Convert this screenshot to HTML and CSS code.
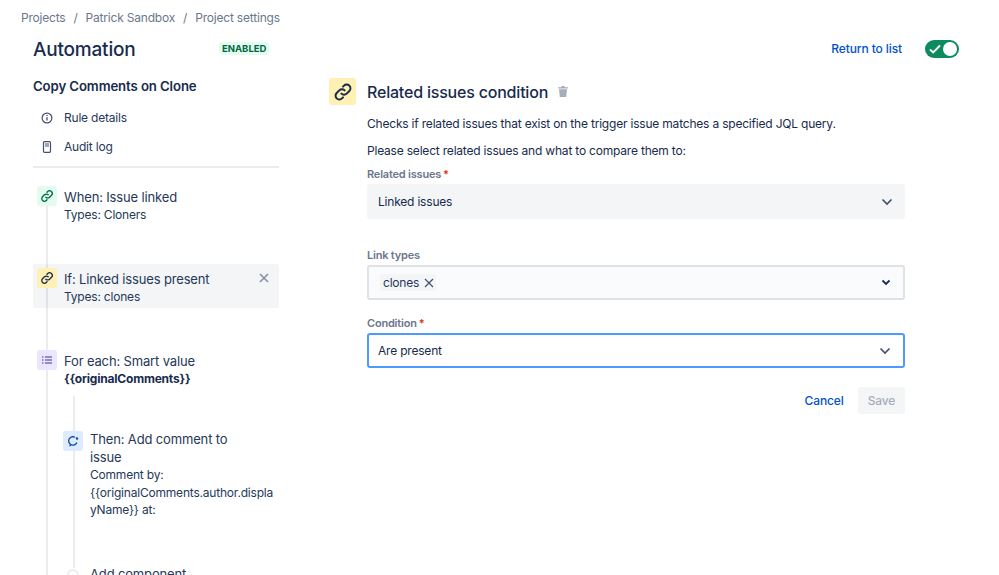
FILE: index.html
```html
<!DOCTYPE html>
<html>
<head>
    <title>Automation - Project settings</title>
    <link rel="stylesheet" href="styles.css">
</head>
<body>
    <nav class="breadcrumbs">
        <span>Projects</span><span class="sep">/</span><span>Patrick Sandbox</span><span class="sep">/</span><span>Project settings</span>
    </nav>
    <header class="page-head">
        <div class="head-left">
            <h1>Automation</h1>
            <span class="lozenge">ENABLED</span>
        </div>
        <div class="head-right">
            <a class="link">Return to list</a>
            <span class="toggle">
                <svg width="14" height="12" viewBox="0 0 14 12"><path d="M2 6.5l3.2 3L12 2.5" fill="none" stroke="#fff" stroke-width="1.8"/></svg>
                <span class="knob"></span>
            </span>
        </div>
    </header>
    <div class="content">
        <aside class="sidebar">
            <h2>Copy Comments on Clone</h2>
            <div class="side-link">
                <svg width="14" height="14" viewBox="0 0 14 14"><circle cx="7" cy="7" r="4.9" fill="none" stroke="#42526e" stroke-width="1.2"/><path d="M7 4v.9M7 6.3v3.2" stroke="#42526e" stroke-width="1.3"/></svg>
                <span>Rule details</span>
            </div>
            <div class="side-link">
                <svg width="14" height="14" viewBox="0 0 14 14"><rect x="3.5" y="1.7" width="7" height="10.6" rx="1" fill="none" stroke="#42526e" stroke-width="1.2"/><path d="M5 4h4M5 6h4" stroke="#42526e" stroke-width="1.2"/></svg>
                <span>Audit log</span>
            </div>
            <hr class="divider">
            <div class="tree">
                <div class="step step-when">
                    <span class="step-icon icon-green">
                        <svg width="14" height="14" viewBox="0 0 24 24"><path d="M10 14a4.500 4.500 0 0 0 6.400 0l3.200-3.200a4.500 4.500 0 0 0-6.400-6.400L12 5.600M14 10a4.500 4.500 0 0 0-6.400 0l-3.200 3.200a4.500 4.500 0 0 0 6.400 6.400L12 18.400" fill="none" stroke="#006644" stroke-width="2.300" stroke-linecap="round"/></svg>
                    </span>
                    <div class="step-text">
                        <div class="step-title">When: Issue linked</div>
                        <div class="step-sub">Types: Cloners</div>
                    </div>
                </div>
                <div class="step step-if">
                    <span class="step-icon icon-yellow">
                        <svg width="14" height="14" viewBox="0 0 24 24"><path d="M10 14a4.500 4.500 0 0 0 6.400 0l3.200-3.200a4.500 4.500 0 0 0-6.400-6.400L12 5.600M14 10a4.500 4.500 0 0 0-6.400 0l-3.200 3.200a4.500 4.500 0 0 0 6.400 6.400L12 18.400" fill="none" stroke="#172b4d" stroke-width="2.300" stroke-linecap="round"/></svg>
                    </span>
                    <div class="step-text">
                        <div class="step-title">If: Linked issues present</div>
                        <div class="step-sub">Types: clones</div>
                    </div>
                    <svg class="step-close" width="10" height="10" viewBox="0 0 10 10"><path d="M1 1l8 8M9 1L1 9" stroke="#8993a4" stroke-width="1.700"/></svg>
                </div>
                <div class="step step-each">
                    <span class="step-icon icon-purple">
                        <svg width="10" height="8" viewBox="0 0 10 8"><path d="M0 1h1.500M3 1h7M0 4h1.500M3 4h7M0 7h1.500M3 7h7" stroke="#403294" stroke-width="1.200"/></svg>
                    </span>
                    <div class="step-text">
                        <div class="step-title">For each: Smart value</div>
                        <div class="step-sub"><b>{{originalComments}}</b></div>
                    </div>
                </div>
                <div class="branch">
                    <div class="step step-then">
                        <span class="step-icon icon-blue">
                            <svg width="12" height="12" viewBox="0 0 12 12"><path d="M9.800 7.500A4.200 4.200 0 1 1 8 2.300M4 10l-1.500 1" fill="none" stroke="#0747a6" stroke-width="1.300"/><circle cx="10" cy="3.500" r="1.200" fill="#0747a6"/></svg>
                        </span>
                        <div class="then-text">
                            <div class="step-title">Then: Add comment to issue</div>
                            <div class="step-sub">Comment by: {{originalComments.author.displayName}} at:</div>
                        </div>
                    </div>
                    <div class="add-row">
                        <span class="add-dot"></span>
                        <span class="step-title">Add component</span>
                    </div>
                </div>
            </div>
        </aside>
        <main class="panel">
            <div class="panel-head">
                <span class="panel-icon">
                    <svg width="20" height="20" viewBox="0 0 24 24"><path d="M10 14a4.500 4.500 0 0 0 6.400 0l3.200-3.200a4.500 4.500 0 0 0-6.400-6.400L12 5.600M14 10a4.500 4.500 0 0 0-6.400 0l-3.200 3.200a4.500 4.500 0 0 0 6.400 6.400L12 18.400" fill="none" stroke="#172b4d" stroke-width="2.400" stroke-linecap="round"/></svg>
                </span>
                <h3>Related issues condition</h3>
                <svg class="trash" width="12" height="13" viewBox="0 0 12 13"><path d="M1 2.200h10v1.300H1zM4.300 1h3.400v1.200H4.300zM2 4.300h8L9.200 12H2.800z" fill="#a5adba"/></svg>
            </div>
            <div class="form">
                <p class="desc">Checks if related issues that exist on the trigger issue matches a specified JQL query.</p>
                <p class="desc desc-two">Please select related issues and what to compare them to:</p>
                <label class="field-label">Related issues<span class="req">*</span></label>
                <div class="select select-plain">
                    <span>Linked issues</span>
                    <svg width="12" height="8" viewBox="0 0 12 8"><path d="M1.500 1.500L6 6l4.500-4.500" fill="none" stroke="#42526e" stroke-width="1.700"/></svg>
                </div>
                <label class="field-label label-links">Link types</label>
                <div class="select select-multi">
                    <span class="tag">clones
                        <svg width="10" height="10" viewBox="0 0 10 10"><path d="M1 1l8 8M9 1L1 9" stroke="#42526e" stroke-width="1.200"/></svg>
                    </span>
                    <svg width="10" height="7" viewBox="0 0 10 7"><path d="M1.500 1.500L5 5l3.500-3.500" fill="none" stroke="#172b4d" stroke-width="1.800"/></svg>
                </div>
                <label class="field-label label-cond">Condition<span class="req">*</span></label>
                <div class="select select-focus">
                    <span>Are present</span>
                    <svg width="12" height="8" viewBox="0 0 12 8"><path d="M1.500 1.500L6 6l4.500-4.500" fill="none" stroke="#42526e" stroke-width="1.700"/></svg>
                </div>
                <div class="actions">
                    <a class="link">Cancel</a>
                    <span class="btn-disabled">Save</span>
                </div>
            </div>
        </main>
    </div>
</body>
</html>
```
FILE: styles.css
```css
html, body {
    height: 575px;
    overflow: hidden;
}
body {
    margin: 0;
    background: #fff;
    color: #172b4d;
    font-family: Inter, "Liberation Sans", sans-serif;
    font-size: 12px;
    letter-spacing: -0.2px;
}
.breadcrumbs {
    padding: 11px 0 0 21px;
    height: 14px;
    line-height: 14px;
    color: #6b778c;
}
.sep {
    margin: 0 8px;
}
.page-head {
    display: flex;
    justify-content: space-between;
    align-items: center;
    margin-top: 11px;
    padding: 0 40px 0 33px;
    height: 26px;
}
.head-left {
    display: flex;
    align-items: center;
}
h1 {
    margin: 0;
    width: 186px;
    font-size: 19px;
    font-weight: 500;
    letter-spacing: -0.2px;
}
.lozenge {
    margin-bottom: 2px;
    padding: 1px 3px;
    border-radius: 3px;
    background: #e3fcef;
    color: #006644;
    font-size: 9.500px;
    font-weight: 700;
    line-height: 11px;
    letter-spacing: 0;
}
.head-right {
    display: flex;
    align-items: center;
    gap: 23px;
}
.head-right .link {
    margin-bottom: 2px;
}
.link {
    color: #0052cc;
    font-weight: 500;
    letter-spacing: -0.1px;
}
.toggle {
    display: flex;
    align-items: center;
    justify-content: space-between;
    box-sizing: border-box;
    width: 34px;
    height: 18px;
    padding: 0 2px 0 3px;
    border-radius: 9px;
    background: #0e8a5f;
}
.knob {
    width: 14px;
    height: 14px;
    border-radius: 50%;
    background: #fff;
}
.content {
    display: flex;
    margin-top: 16px;
    padding-left: 33px;
}
.sidebar {
    width: 246px;
    flex: none;
}
h2 {
    margin: 0 0 8px;
    font-size: 13.200px;
    font-weight: 600;
    line-height: 17px;
    letter-spacing: -0.1px;
}
.side-link {
    display: flex;
    align-items: center;
    gap: 10px;
    height: 29px;
    padding-left: 7px;
    color: #253858;
}
.divider {
    margin: 5px 0 0;
    border: 0;
    border-top: 2px solid #ebecf0;
}
.tree {
    position: relative;
    padding-top: 18px;
}
.tree::before {
    content: "";
    position: absolute;
    left: 13px;
    top: 30px;
    bottom: -200px;
    width: 2px;
    background: #ebecf0;
}
.step {
    position: relative;
    display: flex;
    gap: 7px;
    padding-left: 4px;
}
.step-icon {
    flex: none;
    display: flex;
    align-items: center;
    justify-content: center;
    width: 20px;
    height: 20px;
    border-radius: 3px;
}
.icon-green {
    background: #e3fcef;
}
.icon-yellow {
    background: #fff0b3;
}
.icon-purple {
    background: #eae6ff;
}
.icon-blue {
    background: #deebff;
}
.step-text {
    padding-top: 2px;
}
.step-title {
    font-size: 13px;
    line-height: 18px;
    color: #253858;
    letter-spacing: -0.15px;
}
.step-sub {
    line-height: 17.500px;
    color: #253858;
}
.step-sub b {
    color: #172b4d;
}
.step-if {
    margin: 40px 0 0;
    padding-top: 4px;
    height: 40px;
    border-radius: 3px;
    background: rgba(9, 30, 66, 0.045);
}
.step-close {
    position: absolute;
    right: 10px;
    top: 9px;
}
.step-each {
    margin-top: 42px;
}
.branch {
    position: relative;
    margin: 0 0 0 40px;
    padding-top: 44px;
}
.branch::before {
    content: "";
    position: absolute;
    left: 0;
    top: 9px;
    height: 172px;
    width: 2px;
    background: #ebecf0;
}
.step-then {
    margin-left: -14px;
}
.then-text {
    width: 185px;
    overflow-wrap: anywhere;
}
.then-text .step-title {
    max-width: 170px;
    line-height: 17.500px;
}
.add-row {
    display: flex;
    gap: 11px;
    margin: 46px 0 0 -6px;
    align-items: flex-start;
}
.add-dot {
    flex: none;
    box-sizing: border-box;
    width: 12px;
    height: 12px;
    margin-top: 4px;
    border: 2px solid #ebecf0;
    border-radius: 50%;
    background: #fff;
}
.panel {
    margin-left: 50px;
    width: 576px;
}
.panel-head {
    display: flex;
    align-items: center;
    height: 27px;
}
.panel-icon {
    display: flex;
    align-items: center;
    justify-content: center;
    width: 27px;
    height: 27px;
    margin-right: 11px;
    border-radius: 3px;
    background: #fff0b3;
}
h3 {
    margin: 0 9px 0 0;
    font-size: 16px;
    font-weight: 500;
    letter-spacing: -0.2px;
}
.form {
    margin-left: 38px;
}
.desc {
    margin: 10px 0 0;
    height: 17px;
    line-height: 17px;
}
.field-label {
    display: block;
    margin-top: 8px;
    height: 14px;
    line-height: 14px;
    color: #6b778c;
    font-size: 11px;
    font-weight: 600;
}
.req {
    margin-left: 2px;
    color: #de350b;
}
.select {
    display: flex;
    align-items: center;
    justify-content: space-between;
    box-sizing: border-box;
    height: 35px;
    margin-top: 3px;
    border-radius: 3px;
}
.select-plain {
    padding: 0 12px 0 11px;
    background: #f4f5f7;
}
.label-links {
    margin-top: 29px;
}
.select-multi {
    padding: 0 12px 0 11px;
    border: 2px solid #dfe1e6;
    background: #fafbfc;
}
.tag {
    display: flex;
    align-items: center;
    gap: 5px;
    padding: 0 2px 0 3px;
    height: 17px;
    border-radius: 2px;
    background: #f4f5f7;
    color: #253858;
}
.label-cond {
    margin-top: 16px;
}
.select-focus {
    padding: 0 12px 0 9px;
    border: 2px solid #4c9aff;
    background: #fff;
}
.actions {
    display: flex;
    justify-content: flex-end;
    align-items: center;
    gap: 14px;
    margin-top: 19px;
}
.btn-disabled {
    padding: 0 10px;
    height: 27px;
    line-height: 27px;
    border-radius: 3px;
    background: #f4f5f7;
    color: #a5adba;
    font-weight: 500;
}
```
